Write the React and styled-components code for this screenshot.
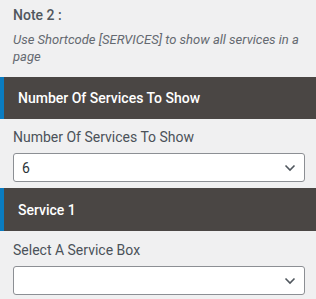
import React from 'react'
import styled, { createGlobalStyle } from 'styled-components'

const Global = createGlobalStyle`
  html, body {
    margin: 0;
    padding: 0;
    background: #f0f0f1;
  }
  body {
    font-family: Roboto, "Liberation Sans", sans-serif;
  }
`

const Panel = styled.div`
  width: 316px;
  height: 299px;
  overflow: hidden;
  background: #f0f0f1;
  display: flex;
  flex-direction: column;
`

const Note = styled.div`
  padding: 5px 13px 0;
  color: #50575e;
`

const NoteTitle = styled.div`
  font-size: 14px;
  font-weight: 500;
  line-height: 20px;
`

const NoteText = styled.div`
  margin-top: 6px;
  font-size: 13px;
  font-style: italic;
  line-height: 17px;
  color: #646970;
`

const SectionBar = styled.div`
  margin-top: ${p => p.$top}px;
  height: ${p => p.$h || 42}px;
  box-sizing: border-box;
  background: #4a4644;
  border-left: 4px solid #0a7cc1;
  padding-left: 14px;
  display: flex;
  align-items: center;
  color: #fff;
  font-size: 14px;
  font-weight: 500;
`

const Field = styled.div`
  padding: 0 11px 0 13px;
  display: flex;
  flex-direction: column;
`

const Label = styled.div`
  margin-top: ${p => p.$top || 8}px;
  height: 20px;
  line-height: 20px;
  font-size: 14px;
  color: #4b5259;
`

const Select = styled.div`
  margin-top: 6px;
  height: 29px;
  box-sizing: border-box;
  border: 1px solid #8c8f94;
  border-radius: 3px;
  background: #fff;
  display: flex;
  align-items: center;
  justify-content: space-between;
  padding: 0 8px;
  font-size: 14px;
  color: #2c3338;
`

const Chevron = () => (
  <svg width="12" height="8" viewBox="0 0 12 8">
    <path d="M1.5 1.5 L6 6 L10.5 1.5" fill="none" stroke="#50575e" strokeWidth="1.6" />
  </svg>
)

export default function App() {
  return (
    <Panel>
      <Global />
      <Note>
        <NoteTitle>Note 2 :</NoteTitle>
        <NoteText>Use Shortcode [SERVICES] to show all services in a page</NoteText>
      </Note>
      <SectionBar $top={12}>Number Of Services To Show</SectionBar>
      <Field>
        <Label>Number Of Services To Show</Label>
        <Select>
          <span>6</span>
          <Chevron />
        </Select>
      </Field>
      <SectionBar $top={6} $h={43}>Service 1</SectionBar>
      <Field>
        <Label $top={9}>Select A Service Box</Label>
        <Select>
          <span></span>
          <Chevron />
        </Select>
      </Field>
    </Panel>
  )
}
